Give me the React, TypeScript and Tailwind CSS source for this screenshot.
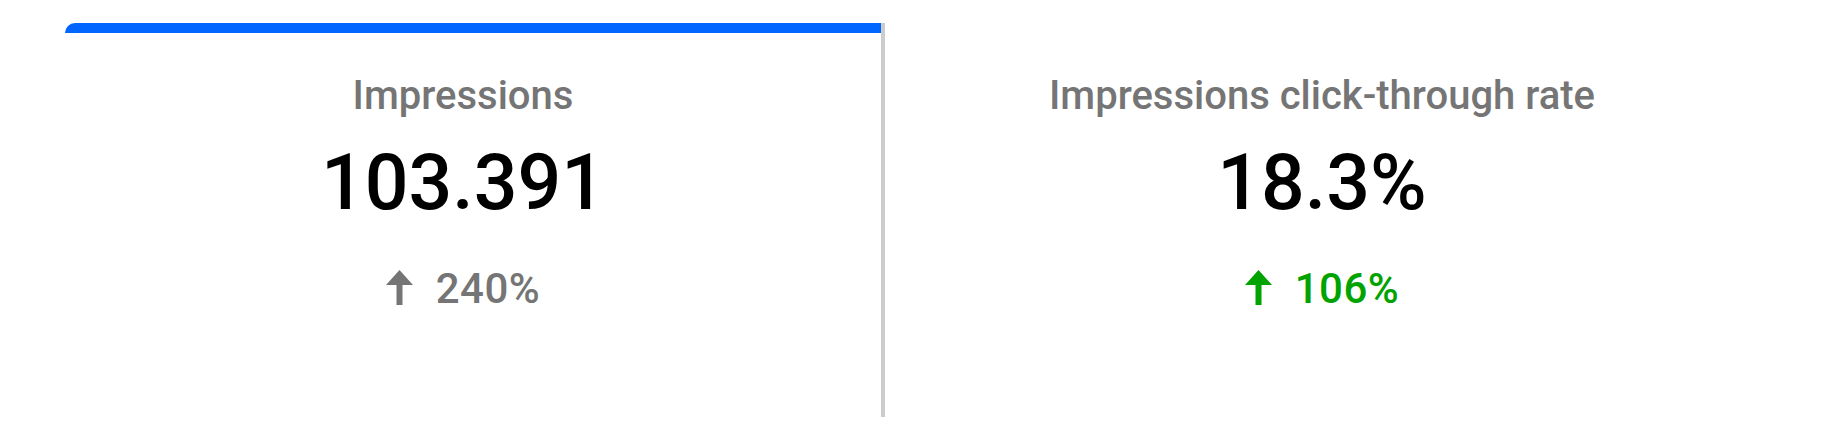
import React from "react";

type Metric = {
  title: string;
  value: string;
  change: string;
  tone: "neutral" | "up";
};

const metrics: Metric[] = [
  { title: "Impressions", value: "103.391", change: "240%", tone: "neutral" },
  { title: "Impressions click-through rate", value: "18.3%", change: "106%", tone: "up" },
];

const ArrowUp = ({ color }: { color: string }) => (
  <svg width="27" height="35" viewBox="0 0 27 35" className="shrink-0 -mt-[4px]">
    <path d="M13.5 0 L27 15 L16.5 15 L16.5 35 L10.5 35 L10.5 15 L0 15 Z" fill={color} />
  </svg>
);

export default function App() {
  const [first, second] = metrics;
  return (
    <div className="w-full h-[440px] bg-white pt-[23px] px-[65px] flex font-['Roboto',sans-serif]">
      {/* selected card */}
      <div className="w-[816px] h-[394px] flex flex-col">
        <div className="h-[10px] bg-[#0066ff] rounded-tl-[10px]" />
        <div className="flex flex-col items-center pt-[39px] pr-[20px]">
          <div className="text-[40px] leading-[48px] font-medium text-[#757575]">{first.title}</div>
          <div className="mt-[18px] text-[77px] leading-[90px] font-medium text-black">{first.value}</div>
          <div className="mt-[37px] flex items-center gap-[23px] text-[42px] leading-[48px] font-medium tracking-[0.5px] text-[#757575]">
            <ArrowUp color="#757575" />
            <span>{first.change}</span>
          </div>
        </div>
      </div>
      <div className="w-1 h-[394px] bg-[#cccccc]" />
      <div className="flex-1 h-[394px] flex flex-col">
        <div className="flex flex-col items-center pt-[49px]">
          <div className="text-[40px] leading-[48px] font-medium text-[#757575]">{second.title}</div>
          <div className="mt-[18px] text-[77px] leading-[90px] font-medium text-black">{second.value}</div>
          <div className="mt-[37px] flex items-center gap-[23px] text-[42px] leading-[48px] font-medium tracking-[0.5px] text-[#00a300]">
            <ArrowUp color="#00a300" />
            <span>{second.change}</span>
          </div>
        </div>
      </div>
    </div>
  );
}
